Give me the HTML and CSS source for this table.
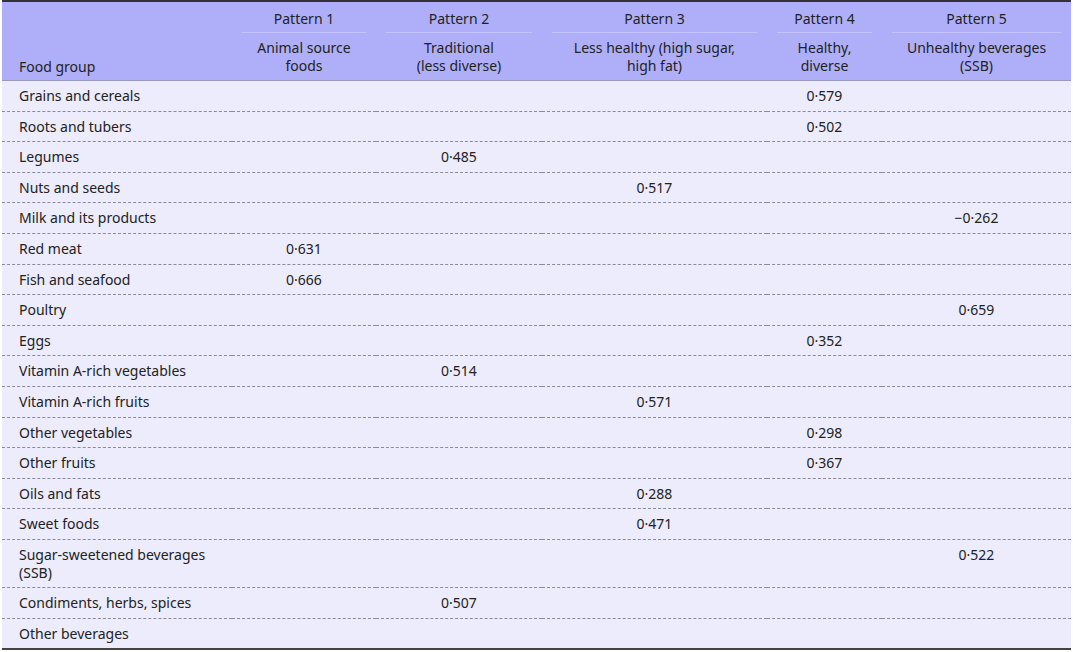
FILE: index.html
```html
<!DOCTYPE html>
<html lang="en">
<head>
<meta charset="utf-8">
<title>Food groups and dietary patterns</title>
<link rel="stylesheet" href="styles.css">
</head>
<body>
<table class="tbl">
  <colgroup>
    <col class="c0"><col class="c1"><col class="c2"><col class="c3"><col class="c4"><col class="c5">
  </colgroup>
  <thead>
    <tr class="hrow1">
      <th class="fg" rowspan="2">Food group</th>
      <th><div class="pat">Pattern 1</div></th>
      <th><div class="pat">Pattern 2</div></th>
      <th><div class="pat">Pattern 3</div></th>
      <th><div class="pat">Pattern 4</div></th>
      <th><div class="pat">Pattern 5</div></th>
    </tr>
    <tr class="hrow2">
      <th>Animal source<br>foods</th>
      <th>Traditional<br>(less diverse)</th>
      <th>Less healthy (high sugar,<br>high fat)</th>
      <th>Healthy,<br>diverse</th>
      <th>Unhealthy beverages<br>(SSB)</th>
    </tr>
  </thead>
  <tbody>
    <tr><td>Grains and cereals</td><td></td><td></td><td></td><td>0·579</td><td></td></tr>
    <tr><td>Roots and tubers</td><td></td><td></td><td></td><td>0·502</td><td></td></tr>
    <tr><td>Legumes</td><td></td><td>0·485</td><td></td><td></td><td></td></tr>
    <tr><td>Nuts and seeds</td><td></td><td></td><td>0·517</td><td></td><td></td></tr>
    <tr><td>Milk and its products</td><td></td><td></td><td></td><td></td><td>−0·262</td></tr>
    <tr><td>Red meat</td><td>0·631</td><td></td><td></td><td></td><td></td></tr>
    <tr><td>Fish and seafood</td><td>0·666</td><td></td><td></td><td></td><td></td></tr>
    <tr><td>Poultry</td><td></td><td></td><td></td><td></td><td>0·659</td></tr>
    <tr><td>Eggs</td><td></td><td></td><td></td><td>0·352</td><td></td></tr>
    <tr><td>Vitamin A-rich vegetables</td><td></td><td>0·514</td><td></td><td></td><td></td></tr>
    <tr><td>Vitamin A-rich fruits</td><td></td><td></td><td>0·571</td><td></td><td></td></tr>
    <tr><td>Other vegetables</td><td></td><td></td><td></td><td>0·298</td><td></td></tr>
    <tr><td>Other fruits</td><td></td><td></td><td></td><td>0·367</td><td></td></tr>
    <tr><td>Oils and fats</td><td></td><td></td><td>0·288</td><td></td><td></td></tr>
    <tr><td>Sweet foods</td><td></td><td></td><td>0·471</td><td></td><td></td></tr>
    <tr><td>Sugar-sweetened beverages<br>(SSB)</td><td></td><td></td><td></td><td></td><td>0·522</td></tr>
    <tr><td>Condiments, herbs, spices</td><td></td><td>0·507</td><td></td><td></td><td></td></tr>
    <tr><td>Other beverages</td><td></td><td></td><td></td><td></td><td></td></tr>
  </tbody>
</table>
</body>
</html>
```
FILE: styles.css
```css
html, body {
  margin: 0;
  padding: 0;
  background: #ffffff;
}

body {
  font-family: "Noto Sans", "Open Sans", sans-serif;
  font-size: 14px;
  color: #222222;
}

.tbl {
  margin-left: 2px;
  width: 1069px;
  border-collapse: collapse;
  table-layout: fixed;
  border-top: 2px solid #333333;
  border-bottom: 2px solid #444444;
}

.c0 { width: 230px; }
.c1 { width: 144px; }
.c2 { width: 166px; }
.c3 { width: 225px; }
.c4 { width: 115px; }
.c5 { width: 189px; }

thead th {
  background: #afaff9;
  font-weight: normal;
  text-align: center;
  line-height: 18px;
}

.hrow1 th {
  padding: 0 10px;
  height: 31px;
  vertical-align: bottom;
}

.pat {
  padding: 8px 0 4px;
  border-bottom: 1px solid #c4c4fb;
}

.hrow2 th {
  padding: 6px 10px 5px;
  vertical-align: top;
  border-bottom: 1px solid #9898c4;
}

th.fg {
  text-align: left;
  vertical-align: bottom;
  padding: 0 10px 4px 17px;
  border-bottom: 1px solid #9898c4;
}

tbody td {
  background: #ececfc;
  line-height: 17.6px;
  padding: 6px 10px 6px;
  text-align: center;
  border-bottom: 1px dashed #8a8a9a;
  vertical-align: top;
}

tbody td:first-child {
  text-align: left;
  padding-left: 17px;
}

tbody tr:last-child td {
  border-bottom: none;
}
```
